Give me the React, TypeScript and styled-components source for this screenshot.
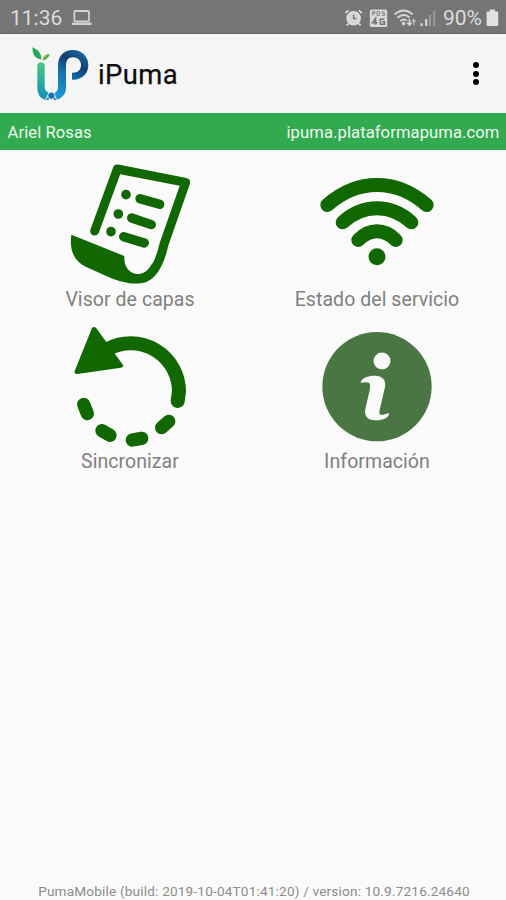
import React from 'react';
import styled, { createGlobalStyle } from 'styled-components';

const GlobalStyle = createGlobalStyle`
  * { box-sizing: border-box; }
  body { margin: 0; background: #fafafa; font-family: Roboto, "Liberation Sans", sans-serif; }
`;

const Screen = styled.div`
  display: flex;
  flex-direction: column;
  width: 100%;
  height: 900px;
  overflow: hidden;
  background: #fafafa;
`;

const StatusBar = styled.div`
  display: flex;
  align-items: center;
  height: 34px;
  padding: 2px 7px 0 10px;
  background: #757575;
  border-bottom: 1px solid #686868;
  color: #dcdcdc;
  font-size: 21px;
`;

const Clock = styled.span`
  width: 52px;
  white-space: nowrap;
`;

const LaptopSlot = styled.div`
  flex: 1;
  padding-left: 9px;
`;

const FixedIcon = styled.svg`
  display: block;
  flex: none;
`;

const BatteryLevel = styled.span`
  margin-left: 7px;
  width: 43px;
  font-size: 21px;
  white-space: nowrap;
`;

const AppBar = styled.header`
  display: flex;
  align-items: center;
  height: 79px;
  padding: 0 24px 0 30px;
  background: #f5f5f5;
`;

const AppTitle = styled.h1`
  flex: 1;
  margin: 3px 0 0 8px;
  font-size: 27.4px;
  line-height: 32px;
  font-weight: 400;
  letter-spacing: 0.4px;
  color: #0c0c0c;
  -webkit-text-stroke: 0.25px #0c0c0c;
`;

const MenuButton = styled.button`
  display: flex;
  flex-direction: column;
  gap: 2.6px;
  padding: 0;
  margin: 0 3px 0 0;
  border: 0;
  background: none;
`;

const MenuDot = styled.i`
  width: 6px;
  height: 6px;
  border-radius: 50%;
  background: #000;
`;

const UserBar = styled.div`
  display: flex;
  align-items: center;
  justify-content: space-between;
  height: 37px;
  padding: 2px 6.5px 0 7.5px;
  background: #31aa50;
  color: #f0faf2;
  font-size: 16.6px;
  letter-spacing: 0.09px;
`;

const Grid = styled.main`
  display: grid;
  flex: 1;
  grid-template-columns: 247px 247px;
  grid-auto-rows: 162px;
  justify-content: start;
  padding: 13px 0 0 6.5px;
`;

const Tile = styled.div`
  display: flex;
  flex-direction: column;
  align-items: center;
`;

const TileIcon = styled.svg`
  display: block;
  width: 120px;
  height: 122px;
  fill: #116800;
`;

const TileLabel = styled.span`
  margin-top: 3px;
  font-size: 19.5px;
  line-height: 24px;
  letter-spacing: 0.06px;
  color: #808080;
  white-space: nowrap;
`;

const Footer = styled.footer`
  height: 17px;
  padding-left: 2px;
  text-align: center;
  font-size: 13.6px;
  line-height: 17px;
  letter-spacing: 0.18px;
  color: #8c8c8c;
  white-space: nowrap;
`;

const LaptopIcon = () => (
  <FixedIcon width="22" height="18" viewBox="0 0 22 18">
    <rect x="3.4" y="2" width="14.6" height="10.4" rx="1.2" fill="none" stroke="#d2d2d2" strokeWidth="1.8" />
    <path d="M0.8 13.6H20.6V15Q20.6 16 19.6 16H1.8Q0.8 16 0.8 15Z" fill="#d2d2d2" />
  </FixedIcon>
);

const SystemIcons = () => (
  <FixedIcon width="92" height="22" viewBox="344 7 92 22">
    <circle cx="353.6" cy="18.3" r="5.9" fill="none" stroke="#dedede" strokeWidth="2.8" />
    <circle cx="353.6" cy="18.3" r="4.8" fill="#d6d6d6" />
    <path d="M353.6 14.8V18.6H356.6" fill="none" stroke="#757575" strokeWidth="1.4" />
    <path d="M345.4 13.2L348.4 10.4M358.8 10.4L361.8 13.2M348.6 23.6L346.6 25.4M358.6 23.6L360.6 25.4" stroke="#dedede" strokeWidth="1.8" />
    <rect x="369.8" y="9.4" width="17.4" height="17.6" rx="1.6" fill="#d8d8d8" />
    <path d="M372.6 15.6V11.6H374.8V13.8H372.8M377 11.6V15.4H379.4V11.6ZM384.8 11.8H382V13.4H384.6V15.4H381.8" fill="none" stroke="#858585" strokeWidth="1" />
    <path d="M375.6 24.8V18.4L372.4 22.8H377.4M384.4 19.2H380.4V24.2H384.4V21.8H382.4" fill="none" stroke="#757575" strokeWidth="1.5" />
    <g fill="none" stroke="#d6d6d6" strokeWidth="1.9">
      <path d="M394.4 14.4Q403.6 6.4 412.8 14.4" />
      <path d="M397.4 17.8Q403.6 12.4 409.6 17.4" />
      <path d="M400.3 21Q403.6 18 406.8 20.8" />
    </g>
    <circle cx="403.6" cy="23.6" r="1.8" fill="#d6d6d6" />
    <path d="M409.5 18.8V24.6M407.3 22.6L409.5 25.2L411.6 22.6" fill="none" stroke="#d6d6d6" strokeWidth="1.6" />
    <path d="M413.8 25.4V20M412.1 21.6L413.8 19.4L415.6 21.6" fill="none" stroke="#bcbcbc" strokeWidth="1.3" />
    <path d="M421.6 26V23.2M426.2 26V19" stroke="#d2d2d2" strokeWidth="2.3" />
    <path d="M430 26V15M434.2 26V10.6" stroke="#9a9a9a" strokeWidth="2" />
  </FixedIcon>
);

const BatteryIcon = () => (
  <FixedIcon width="13" height="18" viewBox="0 0 13 18">
    <path d="M3.8 0.6H9V2.6H11.2Q12.2 2.6 12.2 3.6V16Q12.2 17 11.2 17H1.6Q0.6 17 0.6 16V3.6Q0.6 2.6 1.6 2.6H3.8Z" fill="#e2e2e2" />
  </FixedIcon>
);

const Logo = () => (
  <FixedIcon width="60" height="60" viewBox="90 129 180 180">
    <defs>
      <linearGradient id="stem" x1="0" y1="0" x2="0" y2="1">
        <stop offset="0" stopColor="#4fc183" />
        <stop offset="0.55" stopColor="#28aaa0" />
        <stop offset="1" stopColor="#168fbd" />
      </linearGradient>
      <linearGradient id="bowl" gradientUnits="userSpaceOnUse" x1="170" y1="280" x2="250" y2="160">
        <stop offset="0" stopColor="#1798cf" />
        <stop offset="0.45" stopColor="#1671b0" />
        <stop offset="0.75" stopColor="#113e72" />
        <stop offset="1" stopColor="#17649b" />
      </linearGradient>
    </defs>
    <path d="M112 190Q123 178 134 190V258Q134 270 146 275L135 297Q112 288 112 260Z" fill="url(#stem)" />
    <path d="M171 296L163 277Q174 272 174 256V194C174 163 194 147 218 147C245 147 265 166 265 192C265 219 244 238 216 236V215C233 216 243 207 243 192C243 178 233 169 219 169C204 169 198 178 198 195V260Q198 286 171 296Z" fill="url(#bowl)" />
    <path d="M97 139Q126 151 124 176Q97 173 97 139Z" fill="#27a55b" />
    <path d="M128 178Q130 160 149 158Q146 176 128 178Z" fill="#70a944" />
    <circle cx="154" cy="284" r="10.5" fill="#1872b5" stroke="#f5f5f5" strokeWidth="2" />
    <path d="M144 288L137 297L147 297ZM164 288L169 297L160 297Z" fill="#1c83be" />
  </FixedIcon>
);

const LayersIcon = () => (
  <TileIcon viewBox="60 24 360 366">
    <path
      d="M134 228L202 42L407 82L342 268Q316 382 254 371"
      fill="none"
      stroke="#116800"
      strokeWidth="27"
      strokeLinecap="round"
      strokeLinejoin="round"
    />
    <path d="M64 239L223 303C221 333 236 358 268 357Q292 353 306 326L330 320Q300 392 238 385Q211 381 184 370L107 335C70 318 58 282 64 239Z" />
    <circle cx="228" cy="119" r="14.5" />
    <circle cx="205" cy="177" r="14.5" />
    <circle cx="183" cy="230" r="14.5" />
    <path
      d="M270 131L329 148M245 189L304 209M221 245L283 264"
      fill="none"
      stroke="#116800"
      strokeWidth="28"
      strokeLinecap="round"
    />
  </TileIcon>
);

const SignalIcon = () => (
  <TileIcon viewBox="81 24 360 366">
    <g fill="none" stroke="#116800" strokeWidth="42" strokeLinecap="round">
      <path d="M112 150Q180 90 261 90Q342 90 410 150" />
      <path d="M158 202Q204 160 261 160Q318 160 364 202" />
      <path d="M205 255Q230 229 261 229Q292 229 317 255" />
    </g>
    <circle cx="261" cy="305" r="25.5" />
  </TileIcon>
);

const SyncIcon = () => (
  <TileIcon viewBox="30 30 360 366">
    <path d="M96 39Q103 33 109 40L189 150Q191 157 183 158L52 177Q42 177 44 168Z" />
    <path d="M145 101A145 145 0 0 1 357 229L353 258" fill="none" stroke="#116800" strokeWidth="42" strokeLinecap="round" />
    <g fill="none" stroke="#116800" strokeWidth="40" strokeLinecap="round">
      <path d="M71 268L82 296" />
      <path d="M126 347L150 361" />
      <path d="M217 375L245 370" />
      <path d="M305 338L326 319" />
    </g>
  </TileIcon>
);

const InfoIcon = () => (
  <TileIcon viewBox="51 15 360 366">
    <circle cx="231" cy="200" r="164" fill="#497642" />
    <g fill="#fafafa">
      <circle cx="246" cy="123" r="25.5" />
      <path d="M182 188C183 173 208 166 226 167C248 168 259 180 255 201L239 270C236 283 240 286 249 284L268 279C266 294 247 302 226 301C202 300 192 288 196 267L209 211C212 196 211 187 200 187Z" />
    </g>
  </TileIcon>
);

const tiles = [
  { label: 'Visor de capas', Icon: LayersIcon },
  { label: 'Estado del servicio', Icon: SignalIcon },
  { label: 'Sincronizar', Icon: SyncIcon },
  { label: 'Información', Icon: InfoIcon },
];

export default function App() {
  return (
    <Screen>
      <GlobalStyle />
      <StatusBar>
        <Clock>11:36</Clock>
        <LaptopSlot>
          <LaptopIcon />
        </LaptopSlot>
        <SystemIcons />
        <BatteryLevel>90%</BatteryLevel>
        <BatteryIcon />
      </StatusBar>
      <AppBar>
        <Logo />
        <AppTitle>iPuma</AppTitle>
        <MenuButton aria-label="Menú">
          <MenuDot />
          <MenuDot />
          <MenuDot />
        </MenuButton>
      </AppBar>
      <UserBar>
        <span>Ariel Rosas</span>
        <span>ipuma.plataformapuma.com</span>
      </UserBar>
      <Grid>
        {tiles.map(({ label, Icon }) => (
          <Tile key={label}>
            <Icon />
            <TileLabel>{label}</TileLabel>
          </Tile>
        ))}
      </Grid>
      <Footer>PumaMobile (build: 2019-10-04T01:41:20) / version: 10.9.7216.24640</Footer>
    </Screen>
  );
}
